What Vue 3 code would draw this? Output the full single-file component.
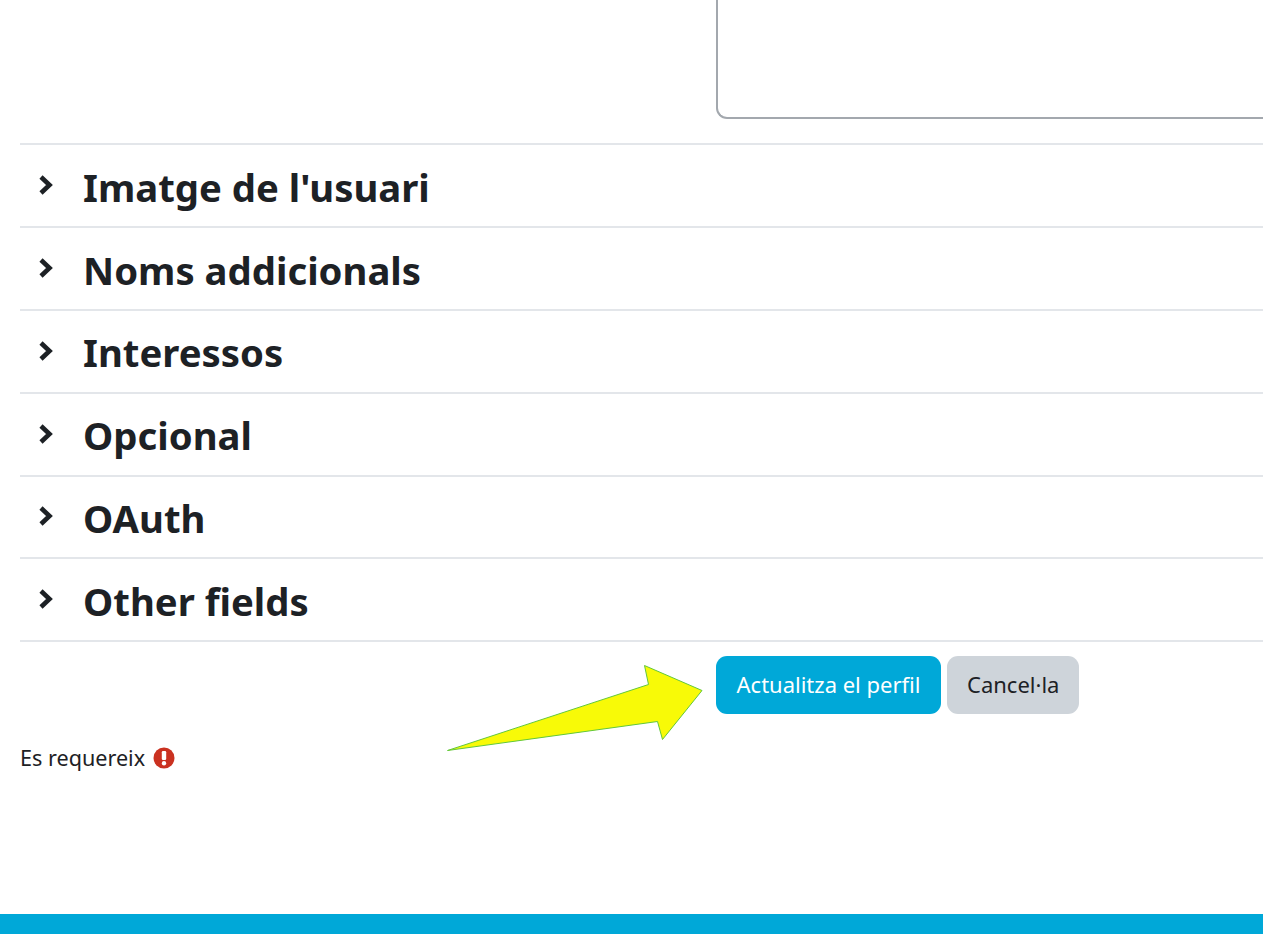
<script setup>
const sections = ["Imatge de l'usuari", 'Noms addicionals', 'Interessos', 'Opcional', 'OAuth', 'Other fields']
</script>

<template>
  <div class="page">
    <div class="top">
      <div class="textarea"></div>
    </div>
    <div class="sections">
      <div v-for="s in sections" :key="s" class="row">
        <svg class="chev" viewBox="0 0 16 22" width="16" height="22">
          <polyline points="3,3 11.5,11 3,19" fill="none" stroke="#1d2125" stroke-width="4.6" stroke-linejoin="miter" />
        </svg>
        <h3 class="title">{{ s }}</h3>
      </div>
    </div>
    <div class="actions">
      <button class="btn primary">Actualitza el perfil</button>
      <button class="btn secondary">Cancel·la</button>
    </div>
    <div class="required">
      <span>Es requereix</span>
      <svg class="alert" viewBox="0 0 22 22" width="22" height="22">
        <circle cx="11" cy="11" r="10.5" fill="#ca3120" />
        <rect x="8.8" y="4" width="4.4" height="9" rx="1.2" fill="#fff" />
        <circle cx="11" cy="16.2" r="2.2" fill="#fff" />
      </svg>
    </div>
    <div class="spacer"></div>
    <div class="footer"></div>
    <svg class="arrow" viewBox="0 0 1263 934" width="1263" height="934">
      <polygon points="447.5,750.5 648.5,684.5 644.5,665.5 702,690.5 662.5,739.5 657.5,721.5" fill="#f8fa07" stroke="#62c83a" stroke-width="1" stroke-linejoin="round" />
    </svg>
  </div>
</template>

<style scoped>
.page {
  position: relative;
  height: 934px;
  width: 1263px;
  overflow: hidden;
  display: flex;
  flex-direction: column;
  background: #fff;
  color: #1d2125;
  font-family: "Noto Sans", "Open Sans", sans-serif;
}
.top {
  height: 143.4px;
  padding-left: 716px;
  box-sizing: border-box;
  flex: none;
}
.textarea {
  height: 119px;
  box-sizing: border-box;
  border-left: 2px solid #a3a8ae;
  border-bottom: 2px solid #a3a8ae;
  border-bottom-left-radius: 11px;
}
.sections {
  margin-left: 20px;
  border-top: 2px solid #e3e6ea;
  flex: none;
}
.row {
  height: 82.8px;
  box-sizing: border-box;
  border-bottom: 2px solid #e3e6ea;
  display: flex;
  align-items: center;
  padding-left: 18px;
}
.chev {
  flex: none;
  margin-top: -1px;
}
.title {
  margin: 4px 0 0 29px;
  font-size: 38.3px;
  line-height: 1.2;
  font-weight: 700;
  color: #1d2125;
}
.actions {
  display: flex;
  gap: 6px;
  padding-left: 716px;
  margin-top: 14px;
  flex: none;
}
.btn {
  height: 58px;
  border: none;
  border-radius: 11px;
  font-family: inherit;
  font-size: 22px;
  padding: 0 20px 2px;
}
.primary {
  background: #00a8d8;
  color: #fff;
  width: 225px;
}
.secondary {
  background: #ced4da;
  color: #1d2125;
  width: 132px;
}
.required {
  display: flex;
  align-items: center;
  gap: 8px;
  margin: 29px 0 0 20px;
  font-size: 21.6px;
  line-height: 30px;
}
.spacer {
  flex: 1;
}
.footer {
  height: 20px;
  flex: none;
  background: #00a8d8;
}
.arrow {
  position: absolute;
  left: 0;
  top: 0;
  pointer-events: none;
}
</style>
